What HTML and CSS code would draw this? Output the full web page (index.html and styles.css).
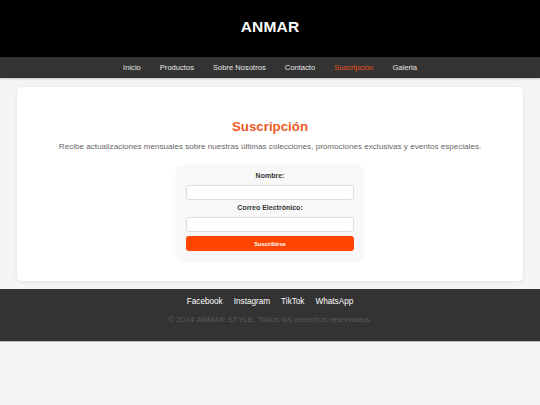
FILE: index.html
```html
<!DOCTYPE html>
<html lang="es">
<head>
<meta charset="utf-8">
<title>ANMAR STYLE</title>
<link rel="stylesheet" href="styles.css">
</head>
<body>
<header class="site-header">
  <div class="logo">ANMAR</div>
</header>
<nav class="main-nav">
  <a href="#">Inicio</a>
  <a href="#">Productos</a>
  <a href="#">Sobre Nosotros</a>
  <a href="#">Contacto</a>
  <a href="#" class="active">Suscripción</a>
  <a href="#">Galeria</a>
</nav>
<main class="card">
  <h1 class="title">Suscripción</h1>
  <p class="lead">Recibe actualizaciones mensuales sobre nuestras últimas colecciones, promociones exclusivas y eventos especiales.</p>
  <form class="form-box">
    <label class="label" for="nombre">Nombre:</label>
    <input class="input" id="nombre" type="text">
    <label class="label label-second" for="correo">Correo Electrónico:</label>
    <input class="input" id="correo" type="email">
    <button class="btn" type="button">Suscribirse</button>
  </form>
</main>
<footer class="site-footer">
  <div class="social">
    <a href="#">Facebook</a>
    <a href="#">Instagram</a>
    <a href="#">TikTok</a>
    <a href="#">WhatsApp</a>
  </div>
  <p class="copy">© 2024 ANMAR STYLE. Todos los derechos reservados.</p>
</footer>
</body>
</html>
```
FILE: styles.css
```css
* { box-sizing: border-box; }
html, body { margin: 0; padding: 0; }
body {
  background: #f5f5f5;
  font-family: "Liberation Sans", Arial, sans-serif;
  color: #333;
}
.site-header {
  background: #000;
  height: 57px;
  display: flex;
  align-items: center;
  justify-content: center;
}
.logo {
  color: #fff;
  font-weight: bold;
  font-size: 15.5px;
  line-height: 20px;
  letter-spacing: 0.2px;
  margin-top: -3px;
}
.main-nav {
  background: #333;
  height: 21px;
  display: flex;
  justify-content: center;
  align-items: center;
  gap: 19px;
  box-shadow: 0 1px 2px rgba(0,0,0,0.2);
}
.main-nav a {
  color: #e6e6e6;
  text-decoration: none;
  font-size: 7.6px;
  line-height: 10px;
}
.main-nav a.active { color: #e8541c; }
.card {
  display: block;
  background: #fff;
  margin: 9px 17px 0;
  border-radius: 5px;
  box-shadow: 0 1px 4px rgba(0,0,0,0.08);
  padding: 30px 20px 21px;
  text-align: center;
}
.title {
  margin: 0;
  color: #ee5a1e;
  font-size: 13.3px;
  line-height: 20px;
  font-weight: bold;
}
.lead {
  margin: 4px 0 0;
  color: #666;
  font-size: 8.1px;
  line-height: 12px;
}
.form-box {
  width: 188px;
  margin: 12px auto 0;
  background: #f8f8f8;
  border-radius: 6px;
  box-shadow: 0 1px 3px rgba(0,0,0,0.05);
  padding: 6px 10px 9px;
  display: flex;
  flex-direction: column;
}
.label {
  font-size: 7px;
  line-height: 10px;
  font-weight: bold;
  color: #333;
}
.label-second { margin-top: 3px; }
.input {
  margin: 4px 0 0;
  height: 15px;
  border: 1px solid #ddd;
  border-radius: 3px;
  background: #fff;
  padding: 0 4px;
}
.btn {
  margin-top: 4px;
  height: 15px;
  border: none;
  border-radius: 3px;
  background: #ff4500;
  color: #fff;
  font-family: "Liberation Sans", Arial, sans-serif;
  font-size: 5.8px;
  font-weight: bold;
  padding: 0;
}
.site-footer {
  margin-top: 8px;
  background: #333;
  padding: 8px 0 16px;
  text-align: center;
  border-bottom: 1px solid #bbb;
}
.social {
  display: flex;
  justify-content: center;
  gap: 11px;
}
.social a {
  color: #fff;
  text-decoration: none;
  font-size: 8.2px;
  line-height: 10px;
}
.copy {
  margin: 8px 0 0;
  color: #5a5a5a;
  font-size: 8.1px;
  line-height: 10px;
}
```
